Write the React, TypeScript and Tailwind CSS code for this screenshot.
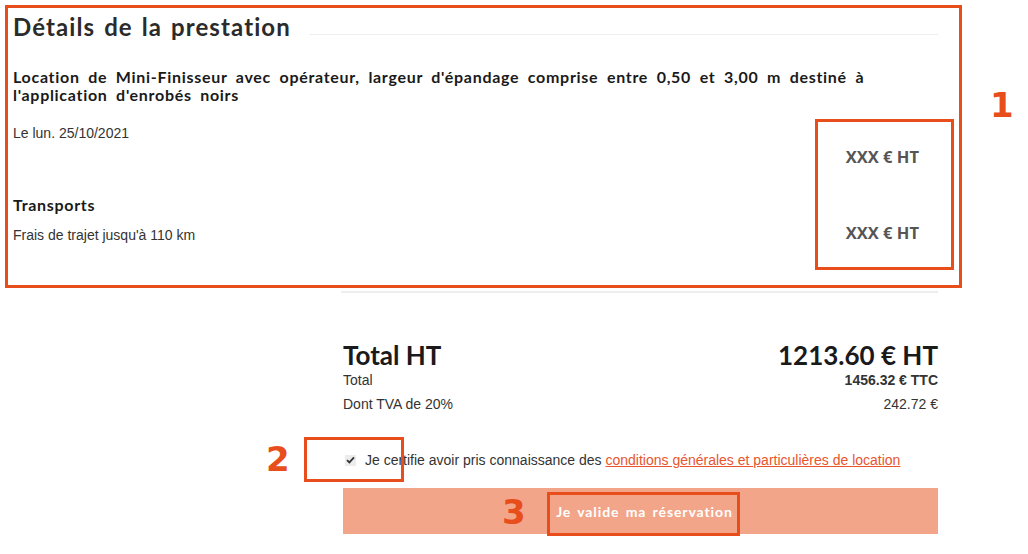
import React from "react";

const heading = { fontFamily: "Lato, 'DejaVu Sans', sans-serif" };
const body = { fontFamily: "'Liberation Sans', Arial, sans-serif" };
const price = { fontFamily: "'Open Sans', 'Liberation Sans', sans-serif" };
const mark = { fontFamily: "'DejaVu Sans', 'Open Sans', sans-serif" };

function Check() {
  return (
    <svg width="9" height="8" viewBox="0 0 9 8">
      <path d="M1 4.2 L3.4 6.4 L8 1.4" fill="none" stroke="#333" strokeWidth="1.8" />
    </svg>
  );
}

export default function App() {
  return (
    <div className="relative w-[1028px] h-[554px] overflow-hidden bg-white text-[#222]">
      {/* Prestation details */}
      <div className="pl-[13px] w-[938px]">
        <div className="flex items-center pt-[11px]">
          <h1
            className="text-[24px] leading-[32px] font-bold text-[#2b2b2b] whitespace-nowrap tracking-[1.1px] [word-spacing:2px]"
            style={heading}
          >
            Détails de la prestation
          </h1>
          <div className="ml-[18px] flex-1 h-px bg-[#eeeeee] mt-[14px]" />
        </div>
        <p
          className="mt-[25px] text-[16px] leading-[18px] font-bold text-[#1a1a1a] tracking-[0.7px] [word-spacing:4px]"
          style={heading}
        >
          Location de Mini-Finisseur avec opérateur, largeur d'épandage comprise entre 0,50 et 3,00 m destiné à
          l'application d'enrobés noirs
        </p>
        <div className="flex justify-between mt-[19px]">
          <span className="text-[14px] leading-[20px] text-[#333]" style={body}>Le lun. 25/10/2021</span>
          <span className="mt-[24px] mr-[19px] text-[16.5px] leading-[20px] font-bold text-[#555]" style={price}>XXX € HT</span>
        </div>
        <div className="flex justify-between mt-[28px]">
          <div>
            <div className="text-[16px] leading-[20px] font-bold text-[#1a1a1a] tracking-[0.7px]" style={heading}>Transports</div>
            <div className="mt-[10px] text-[14px] leading-[20px] text-[#333]" style={body}>Frais de trajet jusqu'à 110 km</div>
          </div>
          <span className="mt-[28px] mr-[19px] text-[16.5px] leading-[20px] font-bold text-[#555]" style={price}>XXX € HT</span>
        </div>
      </div>

      <div className="ml-[341px] mt-[46px] w-[597px] h-[2px] bg-[#eeeeee]" />

      {/* Totals */}
      <div className="ml-[343px] w-[595px]">
        <div className="flex justify-between items-center mt-[46px] text-[26px] leading-[32px] font-bold text-[#1a1a1a]" style={heading}>
          <span>Total HT</span>
          <span>1213.60 € HT</span>
        </div>
        <div className="flex justify-between -mt-[3px] text-[14px] leading-[24px] text-[#333]" style={body}>
          <span>Total</span>
          <span className="font-bold">1456.32 € TTC</span>
        </div>
        <div className="flex justify-between text-[14px] leading-[24px] text-[#333]" style={body}>
          <span>Dont TVA de 20%</span>
          <span>242.72 €</span>
        </div>

        <label className="mt-[34px] flex items-center h-[20px] text-[14px] text-[#333]" style={body}>
          <span className="ml-[2px] w-[11px] h-[11px] bg-[#ececec] flex items-center justify-center">
            <Check />
          </span>
          <span className="ml-[9px]">
            Je certifie avoir pris connaissance des{" "}
            <span className="text-[#e8552e] underline">conditions générales et particulières de location</span>
          </span>
        </label>

        <button
          className="mt-[18px] w-full h-[46px] bg-[#f2a589] text-white text-[14px] font-bold tracking-[0.9px] [word-spacing:2px] pl-[8px]"
          style={heading}
        >
          Je valide ma réservation
        </button>
      </div>

      {/* Callouts */}
      <div className="absolute left-[5px] top-[5px] w-[957px] h-[283px] border-[3px] border-[#e84e1b]" />
      <div className="absolute left-[815px] top-[119px] w-[139px] h-[151px] border-[3px] border-[#e84e1b]" />
      <div className="absolute left-[304px] top-[437px] w-[100px] h-[45px] border-[3px] border-[#e84e1b]" />
      <div className="absolute left-[547px] top-[492px] w-[193px] h-[44px] border-[3px] border-[#e84e1b]" />
      <span className="absolute left-[990px] top-[81px] text-[34px] leading-[48px] font-bold text-[#e84e1b]" style={mark}>1</span>
      <span className="absolute left-[266px] top-[435px] text-[34px] leading-[48px] font-bold text-[#e84e1b]" style={mark}>2</span>
      <span className="absolute left-[502px] top-[488px] text-[34px] leading-[48px] font-bold text-[#e84e1b]" style={mark}>3</span>
    </div>
  );
}
